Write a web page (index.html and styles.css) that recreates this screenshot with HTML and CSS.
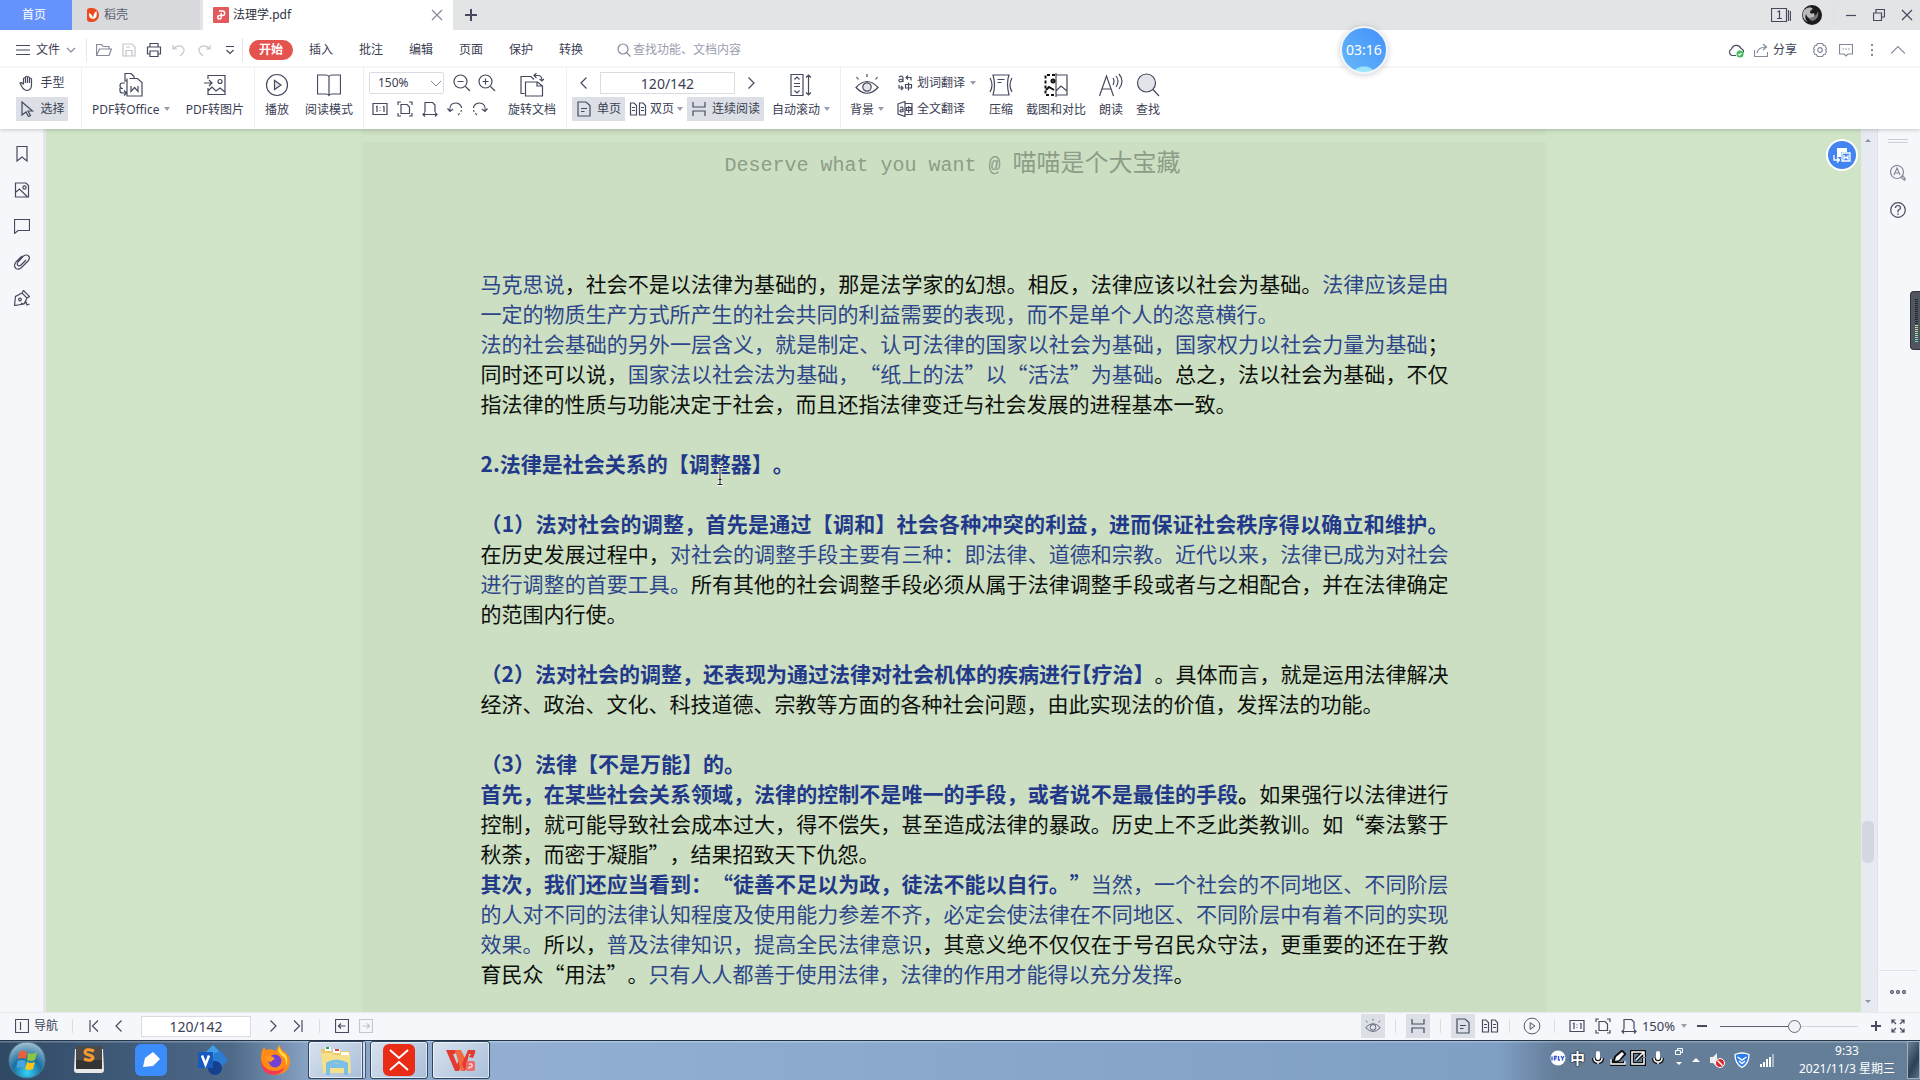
FILE: index.html
```html
<!DOCTYPE html>
<html lang="zh-CN">
<head>
<meta charset="utf-8">
<title>法理学.pdf</title>
<link rel="stylesheet" href="styles.css">
</head>
<body>
<svg class="defs" aria-hidden="true">
  <symbol id="i-fit11" viewBox="0 0 16 16"><path d="M1 2.500h14v11H1zM4 6l1-.7V11M12 5.3V11M11 6l1-.7M8 6.500v.8M8 9v.8"/></symbol>
  <symbol id="i-fitpage" viewBox="0 0 16 16"><path d="M1 4V1h3M12 1h3v3M15 12v3h-3M4 15H1v-3M4 3.500h6l2.500 2.500v6.500H4z"/></symbol>
  <symbol id="i-fitwidth" viewBox="0 0 16 16"><path d="M3 11V1.500h7.500L13 4v7M1 13.500h14M3 11.500l-2 2 2 2M13 11.500l2 2-2 2"/></symbol>
  <symbol id="i-single" viewBox="0 0 16 16"><path d="M2 1h8l4 3.500V15H2zM5 7.500h6M5 10.500h3.500"/></symbol>
  <symbol id="i-double" viewBox="0 0 18 16"><path d="M1.500 2H5l2.500 2.500V14h-6zM10.500 2H14l2.500 2.500V14h-6zM3 6.500h3M3 9.500h3M12 6.500h3M12 9.500h3"/></symbol>
  <symbol id="i-cont" viewBox="0 0 16 16"><path d="M2 1v5h12V1M2 15v-5h12v5"/></symbol>
  <symbol id="i-left" viewBox="0 0 16 16"><path d="M10.500 2.500L5 8l5.500 5.500"/></symbol>
  <symbol id="i-right" viewBox="0 0 16 16"><path d="M5.500 2.500L11 8l-5.500 5.500"/></symbol>
  <symbol id="i-down" viewBox="0 0 10 10"><path d="M1 3l4 4 4-4"/></symbol>
  <symbol id="i-play" viewBox="0 0 24 24"><circle cx="12" cy="12" r="10.500"/><path class="soft" d="M9.500 7.500v9L16 12z"/></symbol>
  <symbol id="i-eye" viewBox="0 0 24 24"><path d="M1 14.500Q12 2.500 23 14.500 12 26 1 14.500zM12 1v3M1.500 4l2 2.500M22.500 4l-2 2.500"/><circle class="soft" cx="12" cy="14" r="4.200"/></symbol>
  <symbol id="i-mic" viewBox="0 0 16 16"><path class="out" d="M8 3v5M4 8q0 4 4 4t4-4M8 12v2"/><path class="wide" d="M8 3v5"/><path class="thin" d="M4 8q0 4 4 4t4-4M8 12v2"/></symbol>
</svg>

<header class="titlebar">
  <button class="tab home">首页</button>
  <button class="tab store"><svg class="i16" viewBox="0 0 16 16"><path fill="#ee4a1e" d="M2 3.500Q2 1 5 1h2a7 7 0 0 1 0 14H5q-3 0-3-3z"/><path fill="#fff" d="M8 12Q3 11 4 6q3 1 4 5 .5-5 3.500-7 1.500 7-3.500 8z"/></svg>稻壳</button>
  <div class="tab doc"><svg class="i16" viewBox="0 0 16 16"><rect width="16" height="16" rx="1" fill="#e25a5e"/><path fill="none" stroke="#fff" stroke-width="1.400" d="M6 4h3.500a2.200 2.200 0 0 1 0 4.500H6.500a1.800 1.800 0 1 0 1.800 1.800V6"/></svg><span>法理学.pdf</span><button class="close" aria-label="关闭标签"><svg class="i12 ln dim" viewBox="0 0 12 12"><path d="M1 1l10 10M11 1L1 11"/></svg></button></div>
  <button class="add" aria-label="新建"><svg class="i12 ln" viewBox="0 0 12 12"><path stroke-width="2" d="M6 0v12M0 6h12"/></svg></button>
  <div class="winctl">
    <button aria-label="窗口"><svg class="ln" width="20" height="14" viewBox="0 0 20 14"><path d="M.5.5h15v13H.5zM17.500 2v11M19.500 3v10M6.500 4l2-1v7M6 10.500h5"/></svg></button>
    <svg class="avatar" viewBox="0 0 20 20"><circle cx="10" cy="10" r="10" fill="#1b1b1d"/><path fill="#b9b9b9" d="M2 5Q8 0 11 4q-3 1-3 4 3 1 4 0 2 5-3 6-4-1-5-5-2 6 2 8Q-2 14 2 5z"/><path fill="#777" d="M11 12q4-2 5-6 2 7-5 10-4-1-4-3z"/></svg>
    <i class="vline"></i>
    <button aria-label="最小化"><svg class="i12 ln" viewBox="0 0 12 12"><path d="M1 6.500h10"/></svg></button>
    <button aria-label="还原"><svg class="i12 ln" viewBox="0 0 12 12"><path d="M.5 4h8v7.500h-8zM3 4V.500h8.500V8H8.500"/></svg></button>
    <button aria-label="关闭"><svg class="i12 ln" viewBox="0 0 12 12"><path d="M1 1l10 10M11 1L1 11"/></svg></button>
  </div>
</header>

<nav class="menubar">
  <button class="file"><svg class="ln" width="14" height="12" viewBox="0 0 14 12"><path d="M0 1.500h14M0 6h14M0 10.500h14"/></svg>文件<svg class="i10 ln dim" ><use href="#i-down"/></svg></button>
  <div class="quick">
    <button aria-label="打开"><svg class="i16 ln dim" viewBox="0 0 16 16"><path d="M.5 13.500v-11h5L7 4.500h6v3M.5 13.500L3.500 7H15.500l-2.500 6.500z"/></svg></button>
    <button aria-label="保存"><svg class="i16 ln faint" viewBox="0 0 16 16"><path d="M2 2h9l3 3v9H2zM5 14V8.500h6V14M5 5h4"/></svg></button>
    <button aria-label="打印"><svg class="i16 ln" viewBox="0 0 16 16"><path d="M4 5V1.500h8V5M4 12H1.500V5h13v7H12M4 9h8v5.500H4z"/></svg></button>
    <button aria-label="撤销"><svg class="i16 ln faint" viewBox="0 0 16 16"><path d="M2 3v4h4M2 7q4-4 8-3 5 3 2 7l-3 3"/></svg></button>
    <button aria-label="恢复"><svg class="i16 ln faint" viewBox="0 0 16 16"><path d="M14 3v4h-4M14 7q-4-4-8-3-5 3-2 7l3 3"/></svg></button>
    <button aria-label="更多"><svg class="i10 ln" viewBox="0 0 10 10"><path d="M1 1.500h8M1.500 5L5 8.500 8.500 5"/></svg></button>
  </div>
  <div class="menus">
    <button class="on">开始</button><button>插入</button><button>批注</button><button>编辑</button><button>页面</button><button>保护</button><button>转换</button>
  </div>
  <label class="search"><svg class="i14 ln dim" viewBox="0 0 14 14"><circle cx="6" cy="6" r="5"/><path d="M9.700 9.700L13.500 13.500"/></svg><input type="text" placeholder="查找功能、文档内容" aria-label="查找功能"></label>
  <div class="menuright">
    <button aria-label="云同步"><svg class="i16 ln" viewBox="0 0 16 16"><path d="M8 13.500H4A3.500 3.500 0 0 1 3.500 7 5 5 0 0 1 13 6.500q3 1 2.500 4"/><circle cx="12" cy="12" r="3.500" fill="#3fb95a" stroke="none"/><path stroke="#fff" d="M10.300 12l1.200 1.200 2-2.200"/></svg></button>
    <button class="share"><svg class="i14 ln dim" viewBox="0 0 14 14"><path d="M.5 7v6.500h13V9M3 10q1-6 9-6M9 1l3.500 3L9 7"/></svg>分享</button>
    <button aria-label="设置"><svg class="i14 ln dim" viewBox="0 0 14 14"><path d="M4.500.500h5l1 2h1.500l1.500 3-1 1.500 1 1.500-1.500 3h-1.500l-1 2h-5l-1-2H2l-1.500-3 1-1.500-1-1.500 1.500-3h1.500z"/><circle cx="7" cy="7" r="2.300"/></svg></button>
    <button aria-label="反馈"><svg class="i14 ln dim" viewBox="0 0 14 14"><path d="M.5 1.500h13v9.500H9l-2 2-2-2H.5zM3.500 6h1.500M6.300 6h1.500M9.200 6h1.500"/></svg></button>
    <button aria-label="更多"><svg class="i14 ln dim" viewBox="0 0 14 14"><path stroke-width="2" d="M7 1v2M7 6v2M7 11v2"/></svg></button>
    <button aria-label="收起"><svg class="i14 ln dim" viewBox="0 0 14 14"><path d="M0 10.500l7-7 7 7"/></svg></button>
  </div>
</nav>

<div class="ribbon">
  <div class="grp g-hand">
    <button class="mini"><svg class="i16 ln" viewBox="0 0 16 16"><path d="M4.500 9V3.500q1-1.500 2 0V8V2q1-1.500 2 0v6V2.500q1-1.500 2 0V8V4q1-1.500 2 0v6q0 5-4.500 5.500Q4 15 2 10L1 8q1-1.500 3.500 1.500"/></svg>手型</button>
    <button class="mini sel"><svg class="i16 ln" viewBox="0 0 16 16"><path d="M3 1l10.500 9H9l2.500 4.500-2 1L7 11l-4 3z"/></svg>选择</button>
  </div>
  <div class="grp g-pdf">
    <button class="tool"><svg class="i24 ln" viewBox="0 0 24 24"><path d="M10.500 5.500h8l4.500 4V23H8V5.500M8 8H6V.500h6l3 3v2M6 10H3.500Q1 10 1 13q0 2.500 3 2.500M1 15v3q0 2 3 2h3M5 17.500L7.500 20 5 22.500M12 13v5.500l3.500-4 3.500 4V13"/></svg><span>PDF转Office<i class="car"></i></span></button>
    <button class="tool"><svg class="i24 ln" viewBox="0 0 24 24"><path d="M5 6V2.500h17v19H5V15M1 10h7.500M6 7l3 3-3 3M5 18l4-4 4 4 4-3 5 4"/><circle cx="17" cy="8.500" r="2"/></svg><span>PDF转图片</span></button>
  </div>
  <div class="grp g-read">
    <button class="tool"><svg class="i24 ln"><use href="#i-play"/></svg><span>播放</span></button>
    <button class="tool"><svg class="i24 ln" viewBox="0 0 24 24"><path d="M12 3.500Q11 2 9 2H.500v19H9q2 0 3 1.500 1-1.500 3-1.500h8.500V2H15q-2 0-3 1.500zV22"/></svg><span>阅读模式</span></button>
  </div>
  <div class="grp g-zoom">
    <div class="rows">
      <div class="row"><select class="zoomsel" aria-label="缩放"><option>150%</option></select>
        <button aria-label="缩小"><svg class="i18 ln" viewBox="0 0 18 18"><circle cx="7.500" cy="7.500" r="6.500"/><path d="M4.500 7.500h6M12.500 12.500L17 17"/></svg></button>
        <button aria-label="放大"><svg class="i18 ln" viewBox="0 0 18 18"><circle cx="7.500" cy="7.500" r="6.500"/><path d="M4.500 7.500h6M7.500 4.500v6M12.500 12.500L17 17"/></svg></button></div>
      <div class="row five">
        <button aria-label="实际大小"><svg class="i16 ln"><use href="#i-fit11"/></svg></button>
        <button aria-label="适合页面"><svg class="i16 ln"><use href="#i-fitpage"/></svg></button>
        <button aria-label="适合宽度"><svg class="i16 ln"><use href="#i-fitwidth"/></svg></button>
        <button aria-label="左旋转"><svg class="i16 ln" viewBox="0 0 16 16"><path d="M3 10Q2 2 9 2q3 0 5 3M.5 7.500L3 10.500 6 8"/><path stroke-dasharray="2 2" d="M14 5q2 5-3 9"/></svg></button>
        <button aria-label="右旋转"><svg class="i16 ln" viewBox="0 0 16 16"><path d="M13 10Q14 2 7 2 4 2 2 5M15.500 7.500L13 10.500 10 8"/><path stroke-dasharray="2 2" d="M2 5q-2 5 3 9"/></svg></button>
      </div>
    </div>
    <button class="tool"><svg class="i24 ln" viewBox="0 0 24 24"><path d="M4.500 20.500H1v-17h10l3 3M5.500 9h12l5 4v10h-17zM17 9v4h5.500M14 2.500h4q4 0 4 5M16.500 0L14 2.500 16.500 5M19.500 6L22 8l2-2"/></svg><span>旋转文档</span></button>
  </div>
  <div class="grp g-page">
    <div class="rows">
      <div class="row pager"><button aria-label="上一页"><svg class="i16 ln"><use href="#i-left"/></svg></button><input type="text" value="120/142" aria-label="页码"><button aria-label="下一页"><svg class="i16 ln"><use href="#i-right"/></svg></button></div>
      <div class="row modes">
        <button class="mini sel"><svg class="i16 ln"><use href="#i-single"/></svg>单页</button>
        <button class="mini"><svg class="i18 ln"><use href="#i-double"/></svg>双页<i class="car"></i></button>
        <button class="mini sel"><svg class="i16 ln"><use href="#i-cont"/></svg>连续阅读</button>
      </div>
    </div>
    <button class="tool"><svg class="i24 ln" viewBox="0 0 24 24"><path d="M2 1.500h12v21H2zM19.500 2v20M17 4.500L19.500 2 22 4.500M17 19.500l2.500 2.500 2.500-2.500M5.500 6.500L8 4l2.500 2.500M5 10.500h6M5 13.500h6M5.500 17.500L8 20l2.500-2.500"/></svg><span>自动滚动<i class="car"></i></span></button>
  </div>
  <div class="grp g-last">
    <button class="tool"><svg class="i24 ln"><use href="#i-eye"/></svg><span>背景<i class="car"></i></span></button>
    <div class="rows trans">
      <button class="mini"><svg class="i16 ln" viewBox="0 0 16 16"><path d="M2 2q4-2 4 1v4M6 4Q1 4 2 6t4-.500M9 2.500h5v3M11 .500L9 2.500l2 2M2 10v3h4M4 11l2 2-2 2M8.500 9.500h6v3.500h-6zM11.500 7.500v8"/></svg>划词翻译<i class="car"></i></button>
      <button class="mini"><svg class="i16 ln" viewBox="0 0 16 16"><path d="M1 3l7-2.500v15L1 13zM8 2.500h7v11H8M3 6.500q3-1 3 1V11M6 8.500q-3 0-3 1.500t3 .5M9.500 6.500H14v3H9.500zM11.700 5v7"/></svg>全文翻译</button>
    </div>
    <button class="tool"><svg class="i24 ln" viewBox="0 0 24 24"><path d="M4 2h16q-3 8 0 20H4Q7 12 4 2zM8.500 6.500h7M8.500 9.500h4M1 5q4 7 0 14M23 5q-4 7 0 14"/></svg><span>压缩</span></button>
    <button class="tool"><svg class="i24 ln" viewBox="0 0 24 24"><path d="M12 2h11v20H12M12 0v24M12 18l5-5 6 5"/><path stroke="#111" stroke-width="2" stroke-dasharray="3 2" d="M11 2H1.500v20H11"/><path stroke="#111" stroke-width="2" d="M2 17l3-3 5 3"/><circle stroke="#111" stroke-width="2" cx="9" cy="8" r="1.500"/></svg><span>截图和对比</span></button>
    <button class="tool"><svg class="i24 ln" viewBox="0 0 24 24"><path d="M.5 23L7.500 3l7 20M3 16h9M14 5q2 3 0 7M17 3q4 5 0 11M20 1q6 7 0 15"/></svg><span>朗读</span></button>
    <button class="tool"><svg class="i24 ln" viewBox="0 0 24 24"><circle class="soft" cx="10.500" cy="10" r="9"/><path d="M17 16.500l6 6.500"/></svg><span>查找</span></button>
  </div>
</div>
<div class="timer">03:16</div>

<main class="work">
  <aside class="rail">
    <button aria-label="书签"><svg class="i16 ln" viewBox="0 0 16 16"><path d="M3 .500h10V15l-5-4-5 4z"/></svg></button>
    <button aria-label="缩略图"><svg class="i16 ln" viewBox="0 0 16 16"><path d="M1.500 1H12l2.500 2.500V15h-13zM2 10l3.500-3 8 8"/><circle cx="10.500" cy="5.500" r="1.600"/></svg></button>
    <button aria-label="批注"><svg class="i16 ln" viewBox="0 0 16 16"><path d="M.5 1.500h15v11H4l-3.500 3z"/></svg></button>
    <button aria-label="附件"><svg class="i16 ln" viewBox="0 0 16 16"><path d="M8 2L2 8q-3 4 0 6.500 2.500 1.500 5-.5l7-7q2.500-3 .5-5t-5 0L4 8q-1.500 2 0 3.500 1.500 1 3-.500L12 6"/></svg></button>
    <button aria-label="签名"><svg class="i16 ln" viewBox="0 0 16 16"><path d="M.5 15.500l1-9L8 3l5 5-3 6zM8 3L9.500 .500l6 6L13 8M7 13q3 2 5-1l1 3 2.500-1"/><circle cx="6" cy="9.500" r="1.300"/></svg></button>
  </aside>
  <section class="viewer">
    <div class="prev"></div>
    <article class="page">
      <div class="running"><span>Deserve what you want @ </span>喵喵是个大宝藏</div>
      <p><em>马克思说</em>，社会不是以法律为基础的，那是法学家的幻想。相反，法律应该以社会为基础。<em>法律应该是由一定的物质生产方式所产生的社会共同的利益需要的表现，而不是单个人的恣意横行。</em></p>
      <p><em>法的社会基础的另外一层含义，就是制定、认可法律的国家以社会为基础，国家权力以社会力量为基础</em>；同时还可以说，<em>国家法以社会法为基础，“纸上的法”以“活法”为基础</em>。总之，法以社会为基础，不仅指法律的性质与功能决定于社会，而且还指法律变迁与社会发展的进程基本一致。</p>
      <h2>2.法律是社会关系的【调整器】。</h2>
      <p class="gap"><strong>（1）法对社会的调整，首先是通过【调和】社会各种冲突的利益，进而保证社会秩序得以确立和维护。</strong>在历史发展过程中，<em>对社会的调整手段主要有三种：即法律、道德和宗教。近代以来，法律已成为对社会进行调整的首要工具。</em>所有其他的社会调整手段必须从属于法律调整手段或者与之相配合，并在法律确定的范围内行使。</p>
      <p class="gap"><strong>（2）法对社会的调整，还表现为通过法律对社会机体的疾病进行<span class="half">【</span>疗治】</strong>。具体而言，就是运用法律解决经济、政治、文化、科技道德、宗教等方面的各种社会问题，由此实现法的价值，发挥法的功能。</p>
      <p class="gap"><strong>（3）法律【不是万能】的。</strong></p>
      <p><strong>首先，在某些社会关系领域，法律的控制不是唯一的手段，或者说不是最佳的手段</strong><b>。</b>如果强行以法律进行控制，就可能导致社会成本过大，得不偿失，甚至造成法律的暴政。历史上不乏此类教训。如“秦法繁于秋荼，而密于凝脂”，结果招致天下仇怨。</p>
      <p><strong>其次，我们还应当看到：“徒善不足以为政，徒法不能以自行。”</strong><em>当然，一个社会的不同地区、不同阶层的人对不同的法律认知程度及使用能力参差不齐，必定会使法律在不同地区、不同阶层中有着不同的实现效果。</em>所以，<em>普及法律知识，提高全民法律意识</em>，其意义绝不仅仅在于号召民众守法，更重要的还在于教育民众“用法”。<em>只有人人都善于使用法律，法律的作用才能得以充分发挥</em>。</p>
      <svg class="ibeam" viewBox="0 0 8 20"><path stroke="#fff" stroke-width="3" d="M1 1.500h6M4 2v16M1 18.500h6"/><path stroke="#111" d="M1.500 1.500h5M4 2v16M1.500 18.500h5M2.500 13.500h3"/></svg>
    </article>
    <button class="convert" aria-label="转换"><svg width="18" height="16" viewBox="0 0 18 16"><path fill="#fff" d="M4 1h10v4H8v5H4z"/><path fill="none" stroke="#fff" stroke-width="1.300" d="M9 6h8v8H9zM11 8v4l2-2 2 2V8M1 8v5h5M4 10.500L6.500 13 4 15.500"/></svg></button>
  </section>
  <div class="scroll"><i class="up"></i><i class="thumb"></i><i class="dn"></i></div>
  <aside class="rail right">
    <i class="grip"></i>
    <button aria-label="检索"><svg class="i16 ln dim" viewBox="0 0 16 16"><circle cx="7" cy="7" r="6.500"/><path d="M4 10l3-7 3 7M5 8h4M11.500 11.500l1.500-.500 2.500 3-1 1.300-3-2.500z"/></svg></button>
    <button aria-label="帮助"><svg class="i16 ln" viewBox="0 0 16 16"><circle cx="8" cy="8" r="7.300"/><path d="M5.500 6q0-2.500 2.500-2.500T10.500 6Q10.500 7 8 8.500V10.500M8 11.500V13"/></svg></button>
    <button class="more" aria-label="更多"><svg class="ln" width="16" height="6" viewBox="0 0 16 6"><circle cx="2" cy="3" r="1.400"/><circle cx="8" cy="3" r="1.400"/><circle cx="14" cy="3" r="1.400"/></svg></button>
  </aside>
  <div class="meter"><i></i></div>
</main>

<footer class="status">
  <button class="navbtn"><svg class="i14 ln" viewBox="0 0 14 14"><path d="M.5.500h13v13H.5zM5.500 3v8"/></svg>导航</button>
  <i class="vline"></i>
  <div class="pages">
    <button aria-label="首页"><svg class="i14 ln" viewBox="0 0 14 14"><path d="M3 1v12M11 1.500L5.500 7l5.500 5.500"/></svg></button>
    <button aria-label="上一页"><svg class="i16 ln"><use href="#i-left"/></svg></button>
    <input type="text" value="120/142" aria-label="页码">
    <button aria-label="下一页"><svg class="i16 ln"><use href="#i-right"/></svg></button>
    <button aria-label="末页"><svg class="i14 ln" viewBox="0 0 14 14"><path d="M11 1v12M3 1.500L8.500 7 3 12.500"/></svg></button>
  </div>
  <i class="vline"></i>
  <div class="hist">
    <button aria-label="后退"><svg class="i14 ln" viewBox="0 0 14 14"><path d="M.5.500h13v13H.5zM10.500 7h-7M6 4.500L3.500 7 6 9.500"/></svg></button>
    <button aria-label="前进"><svg class="i14 ln faint" viewBox="0 0 14 14"><path d="M.5.500h13v13H.5zM3.500 7h7M8 4.500L10.500 7 8 9.500"/></svg></button>
  </div>
  <div class="views">
    <button class="sq sel" aria-label="护眼"><svg class="i16 ln"><use href="#i-eye"/></svg></button><i class="vline"></i>
    <button class="sq sel" aria-label="连续"><svg class="i16 ln"><use href="#i-cont"/></svg></button><i class="vline"></i>
    <button class="sq sel" aria-label="单页"><svg class="i16 ln"><use href="#i-single"/></svg></button>
    <button class="sq tight" aria-label="双页"><svg class="i18 ln"><use href="#i-double"/></svg></button><i class="vline"></i>
    <button class="sq" aria-label="播放"><svg class="i18 ln"><use href="#i-play"/></svg></button><i class="vline"></i>
  </div>
  <div class="zoom">
    <button aria-label="实际大小"><svg class="i16 ln"><use href="#i-fit11"/></svg></button>
    <button aria-label="适合页面"><svg class="i16 ln"><use href="#i-fitpage"/></svg></button>
    <button aria-label="适合宽度"><svg class="i16 ln"><use href="#i-fitwidth"/></svg></button>
    <button class="pct">150%<i class="car"></i></button>
    <button aria-label="缩小"><svg class="i10 ln" viewBox="0 0 10 10"><path stroke-width="2" d="M0 5h10"/></svg></button>
    <input type="range" min="0" max="100" value="54" aria-label="缩放比例">
    <button aria-label="放大"><svg class="i10 ln" viewBox="0 0 10 10"><path stroke-width="2" d="M0 5h10M5 0v10"/></svg></button>
    <button aria-label="全屏"><svg class="i14 ln" viewBox="0 0 14 14"><path d="M1 4.500V1h3.500M1 1l4 4M9.500 1H13v3.500M13 1L9 5M1 9.500V13h3.500M1 13l4-4M9.500 13H13V9.500M13 13L9 9"/></svg></button>
  </div>
</footer>

<div class="taskbar">
  <button class="orb" aria-label="开始"><svg width="38" height="38" viewBox="0 0 38 38"><defs><radialGradient id="orb" cx=".5" cy=".85" r=".9"><stop offset="0" stop-color="#35d3f5"/><stop offset=".45" stop-color="#1a6fa3"/><stop offset="1" stop-color="#b8cbd6"/></radialGradient></defs><circle cx="19" cy="19" r="18" fill="url(#orb)" stroke="#4d7890"/><path fill="#e8603a" d="M11 11q4-3 8 0l-1 7q-4-2-8 0z"/><path fill="#8cc63e" d="M20 12q4 2 9-1l-2 8q-4 2-8 0z"/><path fill="#4aa3e0" d="M9.500 20q4-2 8 0l-1 7q-4-2-8 0z"/><path fill="#f9c61d" d="M19 21q4 2 8 0l-2 7q-4 2-8 0z"/></svg></button>
  <button aria-label="Sublime"><svg class="i32" viewBox="0 0 32 32"><path fill="#e9e9e9" d="M2 5L1 26q0 3 3 3h24q3 0 3-3L30 5z"/><path fill="#4b4a4a" d="M3 2h26v22H3z"/><path fill="#353435" d="M3 16h26v9H3z"/><path fill="none" stroke="#f79a31" stroke-width="3" d="M21 7q-8-3-9 1c0 4 8 2 8 6q-2 4-9 1"/></svg></button>
  <button aria-label="便签"><svg class="i32" viewBox="0 0 32 32"><rect width="32" height="32" rx="6" fill="#3b8dfb"/><path fill="#fff" d="M8 23l2-9 8-6 7 7-7 7z"/></svg></button>
  <button aria-label="Visio"><svg class="i32" viewBox="0 0 32 32"><path fill="#3f9fe8" d="M16 1l8 8-8 8-8-8z"/><path fill="#2b7cd3" d="M17 9l7-2 7 9-8 8-8-6z"/><circle cx="18" cy="24" r="7" fill="#16408f"/><path fill="#185abd" d="M1 8h15v16H1z"/><path stroke="#fff" stroke-width="2.500" fill="none" d="M5 11.500l3.500 9 3.500-9"/></svg></button>
  <button aria-label="Firefox"><svg class="i32" viewBox="0 0 32 32"><path fill="#ff8a16" d="M2 12q0-5 3-9l2 3 4-1 6 2q2-5 4-6 0 4 5 7 5 4 5 10-1 12-15 13Q1 29 2 12z"/><path fill="#f23a52" d="M2 15q1 8 8 11 9 3 16-3-4 8-12 8Q2 30 2 15z"/><path fill="#ffdc3e" d="M20 2q1 5 6 8 4 5 1 12 1-8-5-11-4-4-2-9z"/><circle cx="16" cy="17" r="6.500" fill="#7440d6"/><path fill="#ff9a1c" d="M6 13q5-2 8 0l2 2q-3 1-4 3-3 0-6-5z"/></svg></button>
  <button class="run stack" aria-label="文件夹"><svg class="i32" viewBox="0 0 32 32"><path fill="#e9c968" d="M1 5h9l2 2h18v21H3z"/><path fill="#fff" d="M5 3h6v4H5zM13 5h7v4h-7zM21 8h8v4h-8z"/><path fill="#2f9d3d" d="M6 3h3v2H6z"/><path fill="#d8473a" d="M15 5h4v2h-4z"/><path fill="#f5e08c" d="M1 9h11l3 2h15l1 18H3z"/><path fill="none" stroke="#7cc0e6" stroke-width="4" d="M8 31V20q8-5 18 0v11M8 22h18"/></svg></button>
  <button class="run" aria-label="X"><svg class="i32" viewBox="0 0 32 32"><rect width="32" height="32" rx="6" fill="#e92c15"/><path fill="none" stroke="#fff" stroke-width="2" d="M7 6l9 8 9-8M7 26l9-8 9 8"/></svg></button>
  <button class="run" aria-label="WPS"><svg class="i32" viewBox="0 0 32 32"><path fill="#e33b2e" d="M1 6h11l-2 4H8l4 10 3-7 3 6-4 8h-4z"/><path fill="#f4683f" d="M10 6h6l7 14-3 7h-4z"/><path fill="#e33b2e" d="M20 27l-3-7 6-14h6q2 0 1 3l-2 5-4-1 2-3h-2z"/><rect x="21" y="17" width="9" height="10" rx="2" fill="#ee6a6a"/><path fill="none" stroke="#fff" d="M24 20h3v3h-3v2"/></svg></button>
  <div class="tray">
    <svg class="i16" viewBox="0 0 16 16"><circle cx="8" cy="8" r="7.500" fill="#fff"/><path fill="none" stroke="#3556d8" stroke-width="1.400" d="M2 6.500v4M4.500 10.500v-4H7M4.500 8.500h2M8.500 6v4H10M11 6l1.500 2.500L14 6M12.500 8.500v2"/></svg>
    <span class="ime">中</span>
    <svg class="i16"><use href="#i-mic"/></svg>
    <svg class="i16" viewBox="0 0 16 16"><path class="out" d="M1 9v5h14v-3M5 11l1-4 6-5 2 2-5 5z"/><path class="thin" d="M1 9v5h14v-3"/><path fill="#fff" d="M5 11l1-4 6-5 2 2-5 6z"/></svg>
    <svg class="i16" viewBox="0 0 16 16"><path class="out" d="M9 2H2v12h12V8M6 10l7-7M9 2h5v5"/><path class="thin" d="M9 2H2v12h12V8M6 10l7-7M9 2h5v5"/></svg>
    <svg class="i16"><use href="#i-mic"/></svg>
    <svg class="lang" width="8" height="18" viewBox="0 0 8 18"><path fill="none" stroke="#fff" d="M2.500 3V.500h5v4H6M.5 2.500h5v4h-5z"/><path fill="#fff" d="M1 14h6l-3 3z"/></svg>
    <svg width="8" height="6" viewBox="0 0 8 6"><path fill="#fff" d="M0 5l4-4 4 4z"/></svg>
    <svg class="i16" viewBox="0 0 16 16"><path fill="#eee" d="M1 5h3l4-4v14l-4-4H1z"/><circle cx="11" cy="11" r="4.500" fill="#d92a2a" stroke="#fff"/><path stroke="#fff" stroke-width="1.500" d="M8.500 8.500l5 5"/></svg>
    <svg class="i16" viewBox="0 0 16 16"><path fill="#2b7de9" stroke="#fff" stroke-width="1.300" d="M1 2.500Q8-.500 15 2.500q0 9-7 13-7-4-7-13z"/><path fill="none" stroke="#fff" stroke-width="1.500" d="M3.500 5L8 8l4.500-3M5 9l3 2.500L11 9"/></svg>
    <svg class="i16" viewBox="0 0 16 16"><path fill="#fff" d="M1 12h2v3H1zM4 10h2v5H4zM7 7h2v8H7zM10 5h2v10h-2z"/><path fill="#aab9c8" d="M13 2h2v13h-2z"/></svg>
  </div>
  <div class="clock"><span>9:33</span><span>2021/11/3 星期三</span></div>
  <button class="peek" aria-label="显示桌面"></button>
</div>
</body>
</html>
```
FILE: styles.css
```css
* { box-sizing: border-box; }
body {
  margin: 0;
  height: 100vh;
  display: flex;
  flex-direction: column;
  overflow: hidden;
  background: #fff;
  color: #3b4054;
  font: 12px/16px "Noto Sans", "Noto Sans CJK SC", sans-serif;
}
button, input, select {
  font: inherit;
  color: inherit;
  border: 0;
  background: none;
  padding: 0;
  margin: 0;
}
button { display: flex; align-items: center; justify-content: center; white-space: nowrap; flex: none; }
svg { flex: none; display: block; }
.defs { display: none; }
.i10 { width: 10px; height: 10px; }
.i12 { width: 12px; height: 12px; }
.i14 { width: 14px; height: 14px; }
.i16 { width: 16px; height: 16px; }
.i18 { width: 18px; height: 18px; }
.i24 { width: 24px; height: 24px; }
.i32 { width: 32px; height: 32px; }
.ln { fill: none; stroke: #454a5e; stroke-width: 1.200; }
.dim { stroke: #85899a; }
.faint { stroke: #c4c6ce; }
.soft { fill: #e2e4e9; }
.vline { width: 1px; height: 14px; background: #dcdee3; flex: none; }
.car { display: inline-block; border: 3px solid transparent; border-top: 4px solid #9a9dab; border-bottom: 0; margin-left: 4px; vertical-align: 3px; }

/* title bar */
.titlebar { display: flex; height: 30px; flex: none; background: #e2e4e6; }
.tab { height: 30px; }
.home { width: 72px; padding-right: 4px; background: #6593fb; color: #fff; }
.store { width: 131px; padding-left: 13px; gap: 3px; justify-content: flex-start; background: #d8dadd; border-right: 3px solid #e2e4e6; color: #5c6070; }
.doc { width: 250px; display: flex; align-items: center; gap: 4px; padding: 0 10px; background: #fff; color: #2c3040; }
.close { margin-left: auto; }
.add { width: 36px; }
.winctl { display: flex; align-items: center; margin-left: auto; padding-right: 7px; gap: 16px; }
.winctl .vline { height: 20px; margin: 0 -5px; }
.avatar { width: 20px; height: 20px; margin: 0 0 0 -5px; }

/* menu */
.menubar { display: flex; align-items: center; height: 38px; flex: none; padding: 1px 0 0 16px; }
.file { width: 71px; height: 24px; gap: 6px; justify-content: flex-start; border-right: 1px solid #e4e6ea; }
.quick { width: 156px; height: 24px; display: flex; align-items: center; gap: 9px; padding-left: 9px; border-right: 1px solid #e4e6ea; }
.quick button:last-child { margin-left: 4px; }
.menus { display: flex; gap: 6px; padding: 0 24px 0 6px; }
.menus button { width: 44px; height: 20px; }
.menus .on { background: #e5534f; color: #fff; border-radius: 10px; font-weight: 700; }
.search { display: flex; align-items: center; gap: 2px; }
.search input { width: 140px; outline: 0; }
.search input::placeholder { color: #9a9dae; opacity: 1; }
.menuright { display: flex; align-items: center; margin-left: auto; gap: 12px; padding-right: 15px; }
.share { gap: 5px; margin-right: 4px; margin-left: -2px; }

/* ribbon */
.ribbon { display: flex; height: 61px; flex: none; padding-bottom: 1px; box-shadow: 0 1px 4px #0003; z-index: 1; }
.grp { display: flex; align-items: flex-start; justify-content: space-between; padding-top: 3px; border-right: 1px solid #eceef1; flex: none; }
.tool { flex-direction: column; gap: 5px; height: 49px; }
.mini { height: 24px; gap: 5px; }
.sel { background: #dce0e6; }
.rows { display: flex; flex-direction: column; gap: 2px; }
.row { display: flex; align-items: center; height: 24px; }
.g-hand { width: 82px; flex-direction: column; justify-content: flex-start; gap: 2px; padding-left: 16px; }
.g-hand .mini { width: 52px; }
.g-pdf { width: 173px; padding-left: 10px; padding-right: 10px; }
.g-read { width: 109px; padding-left: 10px; padding-right: 10px; }
.g-zoom { width: 203px; padding-left: 5px; padding-right: 10px; }
.g-zoom .row { gap: 7px; }
.g-zoom .five { gap: 9px; padding-left: 3px; }
.zoomsel { width: 75px; height: 22px; border: 1px solid #d9dce1; padding-left: 8px; margin-right: 2px; border-radius: 2px; appearance: none; background: linear-gradient(45deg, #0000 45%, #85899a 45% 55%, #0000 55%) 61px 8px / 5px 5px no-repeat, linear-gradient(-45deg, #0000 45%, #85899a 45% 55%, #0000 55%) 66px 8px / 5px 5px no-repeat; }
.g-page { width: 274px; padding-left: 5px; padding-right: 10px; }
.pager { padding-left: 4px; gap: 8px; }
.pager input, .pages input { height: 22px; border: 1px solid #d9dce1; text-align: center; font-size: 14px; background: #fff; }
.pager input { width: 135px; }
.modes { gap: 4px; }
.modes .mini { padding: 0 4px; }
.modes .mini:nth-child(2) { padding: 0; gap: 3px; }
.modes .mini:nth-child(2) .car { margin-left: 0; }
.g-last { padding-left: 9px; gap: 13px; border: 0; }
.trans { align-items: flex-start; }
.trans .mini { gap: 4px; }
.trans .car { margin-left: 1px; }

.timer {
  position: absolute;
  top: 26px;
  left: 71.04%;
  transform: translateX(-50%);
  width: 48px;
  height: 48px;
  border: 2px solid #eef4fc;
  border-radius: 50%;
  background: radial-gradient(circle at 50% 120%, #9be4fb 0 24%, #0000 26%), linear-gradient(45deg, #66b9f9, #4390fb);
  color: #fff;
  font-size: 14px;
  line-height: 44px;
  text-align: center;
  box-shadow: 0 1px 6px #0003;
  z-index: 2;
}

/* work area */
.work { flex: 1; min-height: 0; display: flex; position: relative; }
.rail { width: 46px; flex: none; display: flex; flex-direction: column; align-items: center; gap: 20px; padding: 17px 0 0; background: #f5f7fa; border-right: 3px solid #e4e7ec; }
.rail button { height: 16px; }
.right { width: 43px; border: 0; border-left: 1px solid #dfe2e8; gap: 21px; padding: 10px 3px 0 0; }
.grip { width: 20px; height: 4px; border: 1px solid #c9ccd4; border-width: 1px 0; margin-bottom: 1px; }
.right .more { margin-top: auto; width: 38px; height: 42px; border-top: 1px solid #dfe2e8; }
.viewer { flex: 1; position: relative; overflow: hidden; background: #d0e4c8; }
.prev { width: 1184px; max-width: 100%; height: 6px; margin: 0 auto 7px; background: #ccdfc3; }
.page { position: relative; width: 1184px; max-width: 100%; min-height: 100%; margin: 0 auto; padding: 0 97px 0 119px; background: #ccdfc3; color: #0c0f0c; font: 21px/30px "Noto Sans CJK SC", sans-serif; text-spacing-trim: space-all; }
.page p, .page h2 { margin: 0; font-size: 21px; line-height: 30px; text-align: justify; }
.page em { font-style: normal; color: #2c4689; }
.page strong, .page h2 { font-weight: 700; color: #22398a; }
.page h2 { margin-top: 30px; }
.page .gap { margin-top: 30px; }
.half { font-feature-settings: "halt"; }
.running { height: 38px; line-height: 38px; margin: 0 -22px 88px 0; padding-right: 46px; text-align: center; font-size: 24px; color: #8d9d87; white-space: pre; }
.running span { font-family: "Liberation Mono", monospace; font-size: 20px; }
.ibeam { position: absolute; left: 354px; top: 324px; width: 8px; height: 20px; fill: none; }
.convert { position: absolute; right: 3px; top: 10px; width: 32px; height: 32px; border: 2px solid #fff; border-radius: 50%; background: #4285f0; }
.scroll { width: 16px; flex: none; display: flex; flex-direction: column; align-items: center; background: #e7eaf0; padding: 10px 2px 9px 0; }
.scroll i { border: 3px solid transparent; }
.scroll .up { border-bottom-color: #8e92a0; border-top: 0; }
.scroll .dn { border-top-color: #8e92a0; border-bottom: 0; margin-top: auto; }
.scroll .thumb { width: 12px; height: 42px; border: 0; border-radius: 5px; background: #d3d7df; margin-top: 679px; }
.meter { position: absolute; right: 0; top: 162px; width: 10px; height: 59px; padding: 7px 2px 7px 4px; background: #50555f; border: 1px solid #30343c; border-right: 0; border-radius: 4px 0 0 4px; }
.meter i { display: block; height: 100%; background: repeating-linear-gradient(#0000 0 1px, #50555f 1px 2px), linear-gradient(#22252c 0 57%, #b9e38b 57% 75%, #5fd9c2); }

/* status */
.status { display: flex; align-items: center; height: 28px; flex: none; padding: 0 15px 1px; background: #f5f7fa; border-top: 1px solid #e6e8ec; }
.navbtn { gap: 5px; margin-right: 14px; }
.pages { display: flex; align-items: center; gap: 10px; padding: 0 14px; }
.pages input { width: 110px; height: 21px; margin: 0 4px; }
.hist { display: flex; gap: 10px; padding-left: 15px; }
.views { display: flex; align-items: center; gap: 10px; margin-left: auto; }
.sq { width: 24px; height: 24px; }
.tight { width: 18px; margin-left: -4px; }
.zoom { display: flex; align-items: center; gap: 10px; padding-left: 14px; }
.pct { font-size: 13px; margin-left: -5px; }
.pct .car { margin-left: 6px; }
.zoom input { appearance: none; width: 138px; height: 14px; margin: 0 3px; background: linear-gradient(90deg, #5b6074 54%, #d0d3da 54%) center / 100% 1px no-repeat; }
.zoom input::-webkit-slider-thumb { appearance: none; width: 13px; height: 13px; border: 1px solid #666b7c; border-radius: 50%; background: #f1f3f6; }

/* taskbar */
.taskbar { display: flex; align-items: center; height: 40px; flex: none; padding-bottom: 1px; border-top: 1px solid #24364b; background: linear-gradient(#fff4 0 1px, #0000 2px), linear-gradient(90deg, #2f4965, #4d6988 12%, #87a2c2 16%, #92afd3 26%, #809fc5 78%, #647e9a 81%, #657f99); }
.taskbar > button:not(.run):not(.orb):not(.peek) { width: 62px; }
.orb { width: 54px; margin-right: 4px; }
.run { width: 58px; height: 38px; margin-right: 4px; border: 1px solid #32445b; border-radius: 3px; background: linear-gradient(135deg, #d7e2ef, #a9bfda); box-shadow: inset 0 0 0 1px #fff9; }
.stack { border-right: 4px double #40546d; margin-left: 2px; }
.taskbar .run:last-of-type { background: #dce5f1; }
.tray { display: flex; align-items: center; gap: 4px; margin-left: auto; padding-right: 20px; }
.tray > :nth-child(n+7) { margin-left: 5px; }
.tray > :nth-child(-n+6) { margin-bottom: 4px; }
.lang { align-self: flex-start; }
.ime { width: 16px; color: #fff; font: 700 15px/20px "Noto Sans CJK SC", sans-serif; text-shadow: 0 0 1px #000, 0 0 2px #000; }
.out { fill: none; stroke: #111; stroke-width: 4; }
.thin { fill: none; stroke: #fff; stroke-width: 1.500; }
.wide { stroke: #fff; stroke-width: 4; stroke-linecap: round; }
.clock { width: 104px; display: flex; flex-direction: column; align-items: center; gap: 2px; margin-right: 8px; color: #fff; white-space: nowrap; }
.peek { width: 13px; height: 38px; border: 1px solid #9fb0c0; background: linear-gradient(120deg, #6c8093, #2c4156 60%, #5a7186); }
```
